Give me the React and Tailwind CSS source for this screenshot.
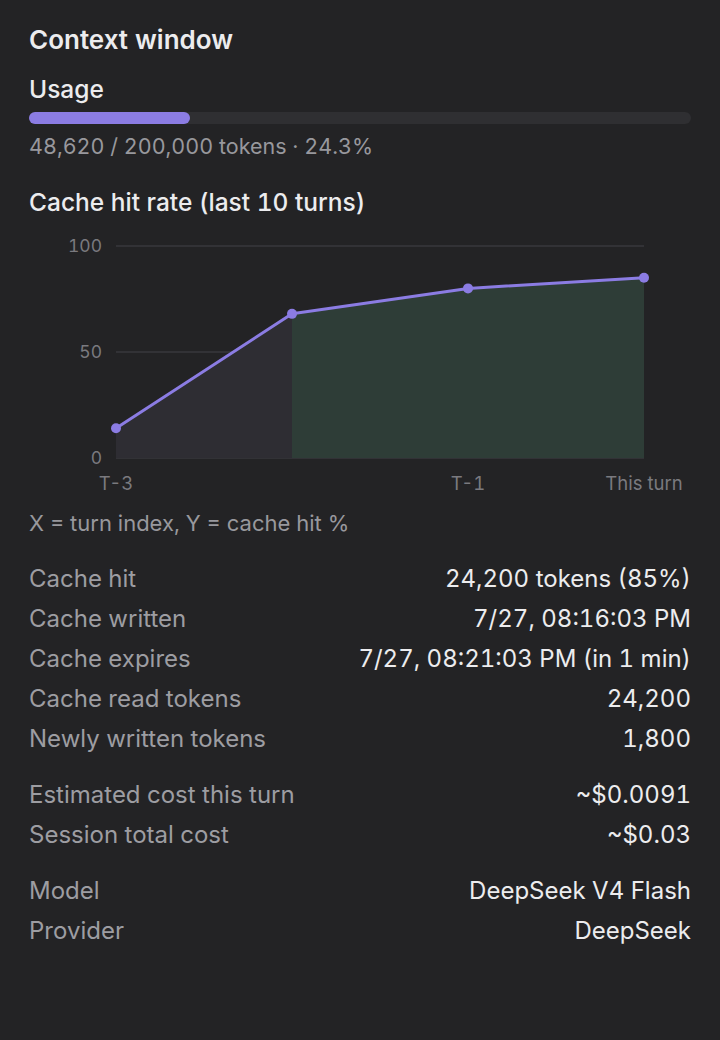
import React from 'react';

const usage = { used: 48620, total: 200000 };

// cache hit % per turn, oldest first
const turns = [
    { label: 'T-3', value: 14 },
    { label: '', value: 68 },
    { label: 'T-1', value: 80 },
    { label: 'This turn', value: 85 },
];

const stats = [
    [
        ['Cache hit', '24,200 tokens (85%)'],
        ['Cache written', '7/27, 08:16:03 PM'],
        ['Cache expires', '7/27, 08:21:03 PM (in 1 min)'],
        ['Cache read tokens', '24,200'],
        ['Newly written tokens', '1,800'],
    ],
    [
        ['Estimated cost this turn', '~$0.0091'],
        ['Session total cost', '~$0.03'],
    ],
    [
        ['Model', 'DeepSeek V4 Flash'],
        ['Provider', 'DeepSeek'],
    ],
];

const HitRateChart = () => {
    const left = 87;
    const step = 176;
    const top = 15;
    const bottom = 227;
    const y = (v) => bottom - ((bottom - top) * v) / 100;
    const pts = turns.map((t, i) => [left + i * step, y(t.value)]);
    const line = pts.map((p) => p.join(',')).join(' ');
    const [p0, p1] = pts;
    const firstArea = `${p0[0]},${bottom} ${p0[0]},${p0[1]} ${p1[0]},${p1[1]} ${p1[0]},${bottom}`;
    const restArea = [`${p1[0]},${bottom}`, ...pts.slice(1).map((p) => p.join(',')), `${pts[pts.length - 1][0]},${bottom}`].join(' ');

    return (
        <svg width="662" height="266" viewBox="0 0 662 266" className="block" style={{ fontVariantNumeric: 'tabular-nums' }}>
            {[100, 50, 0].map((v) => (
                <g key={v}>
                    <line x1={left} x2={left + step * 3} y1={y(v)} y2={y(v)} stroke="#38383c" strokeWidth="1.5" />
                    <text x={left - 14} y={y(v) + 6} textAnchor="end" fontSize="17.5" fill="#7a7a7f" fontFamily="Inter, sans-serif">{v}</text>
                </g>
            ))}
            <polygon points={firstArea} fill="#2e2d33" />
            <polygon points={restArea} fill="#2e3d37" />
            <polyline points={line} fill="none" stroke="#8b7ce3" strokeWidth="3" strokeLinejoin="round" />
            {pts.map(([cx, cy], i) => (
                <circle key={i} cx={cx} cy={cy} r="5" fill="#8b7ce3" />
            ))}
            {turns.map((t, i) => t.label && (
                <text key={t.label} x={left + i * step} y={259} textAnchor="middle" fontSize="18.5" fill="#7a7a7f" fontFamily="Inter, sans-serif">{t.label}</text>
            ))}
        </svg>
    );
};

const App = () => {
    const pct = (usage.used / usage.total) * 100;

    return (
        <div className="min-h-screen w-[720px] bg-[#232325] px-[29px] pt-[24px] font-['Inter',sans-serif] tabular-nums text-[#ececee]">
            <h1 className="text-[26px] font-semibold leading-[32px]">Context window</h1>

            <h2 className="mt-[18px] text-[24.5px] font-medium leading-[30px]">Usage</h2>
            <div className="mt-[8px] h-[12px] w-full rounded-full bg-[#2f2f32]">
                <div className="h-full rounded-full bg-[#8b7ce3]" style={{ width: `${pct}%` }} />
            </div>
            <p className="mt-[8px] text-[21.5px] leading-[28px] text-[#98989d]">
                48,620 / 200,000 tokens · {pct.toFixed(1)}%
            </p>

            <h2 className="mt-[27px] text-[24.5px] font-medium leading-[30px]">Cache hit rate (last 10 turns)</h2>
            <div className="mt-[14px]">
                <HitRateChart />
            </div>
            <p className="mt-[12px] text-[22px] leading-[28px] text-[#98989d]">X = turn index, Y = cache hit %</p>

            <div className="mt-[22px] flex flex-col gap-[16px]">
                {stats.map((group, gi) => (
                    <div key={gi} className="flex flex-col">
                        {group.map(([label, value]) => (
                            <div key={label} className="flex h-[40px] items-center justify-between text-[24px]">
                                <span className="text-[#9d9da2]">{label}</span>
                                <span className="text-[#ececee]">{value}</span>
                            </div>
                        ))}
                    </div>
                ))}
            </div>
        </div>
    );
};

export default App;
